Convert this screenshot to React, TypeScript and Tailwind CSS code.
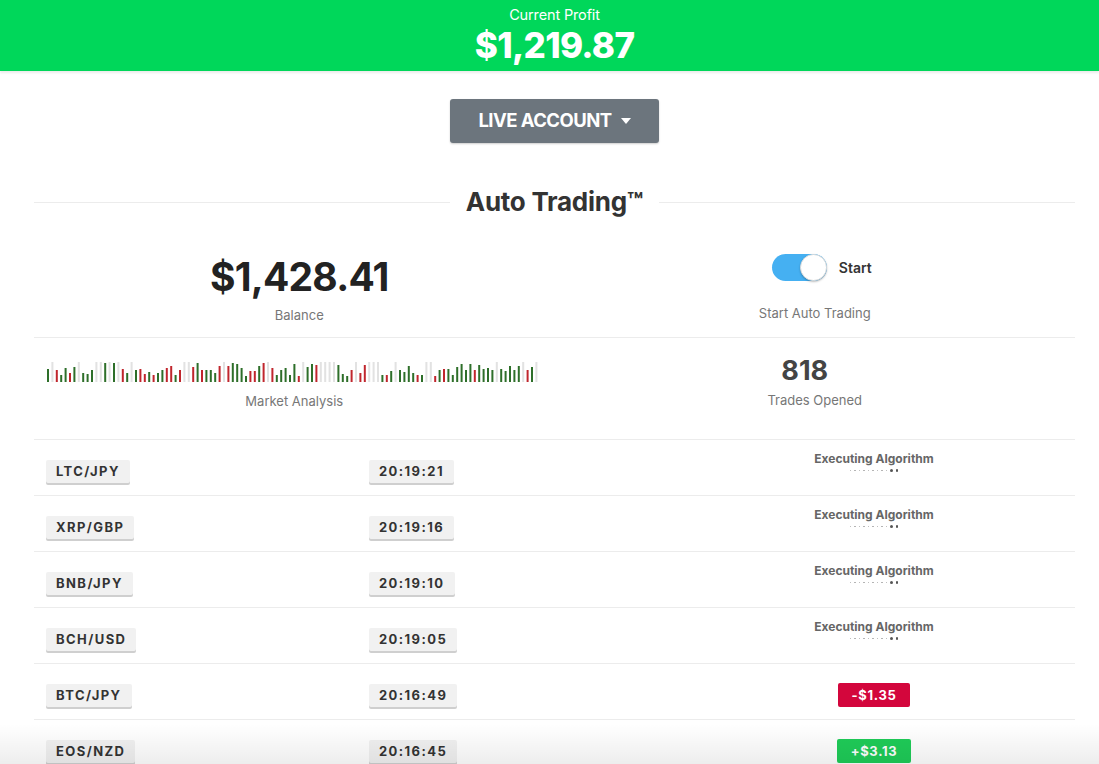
import React from "react";

const rows = [
  { pair: "LTC/JPY", time: "20:19:21", result: null },
  { pair: "XRP/GBP", time: "20:19:16", result: null },
  { pair: "BNB/JPY", time: "20:19:10", result: null },
  { pair: "BCH/USD", time: "20:19:05", result: null },
  { pair: "BTC/JPY", time: "20:16:49", result: "-$1.35" },
  { pair: "EOS/NZD", time: "20:16:45", result: "+$3.13" },
];

function Bars() {
  const bars: { x: number; h: number; c: string }[] = [];
  let seed = 7;
  const rnd = () => {
    seed = (seed * 9301 + 49297) % 233280;
    return seed / 233280;
  };
  const n = 112;
  for (let i = 0; i < n; i++) {
    const r = rnd();
    const c = r < 0.2 ? "#e2e2e2" : r < 0.42 ? "#c0262d" : "#2e6f2a";
    const h = c === "#e2e2e2" ? 20 : 6 + Math.floor(rnd() * 14);
    bars.push({ x: i * 4.4, h, c });
  }
  return (
    <svg width="494" height="22" viewBox="0 0 494 22">
      {bars.map((b, i) => (
        <rect key={i} x={b.x} y={21 - b.h} width="2" height={b.h} fill={b.c} />
      ))}
    </svg>
  );
}

function Tag({ children }: { children: React.ReactNode }) {
  return (
    <span className="inline-block bg-[#f1f1f1] px-[10px] h-[23px] leading-[23px] text-[13px] font-bold tracking-[0.11em] text-[#333] shadow-[0_2px_0_#cfcfcf] rounded-[2px]">
      {children}
    </span>
  );
}

export default function App() {
  return (
    <div
      className="relative w-[1099px] h-[764px] overflow-hidden bg-white"
      style={{ fontFamily: "Inter, 'Liberation Sans', Arial, sans-serif" }}
    >
      <div className="h-[71px] bg-[#00d75a] flex flex-col items-center pl-[10px] text-white shadow-[0_2px_2px_rgba(0,0,0,0.08)]">
        <div className="text-[14.5px] leading-[18px] mt-[6px] tracking-[-0.01em]">Current Profit</div>
        <div className="text-[35px] leading-[42px] font-extrabold tracking-[-0.02em]">$1,219.87</div>
      </div>

      <div className="flex justify-center mt-[28px] pl-[10px]">
        <button className="w-[209px] h-[44px] bg-[#6c757d] rounded-[3px] text-white text-[18.5px] font-bold tracking-[-0.03em] flex items-center justify-center gap-[9px] shadow-[0_1px_2px_rgba(0,0,0,0.2)]">
          LIVE ACCOUNT
          <svg width="10" height="6" viewBox="0 0 10 6">
            <path d="M0 0 L10 0 L5 6 Z" fill="white" />
          </svg>
        </button>
      </div>

      <div className="ml-[34px] w-[1041px]">
        <div className="flex items-center mt-[43px] gap-[16px]">
          <div className="flex-1 h-px bg-[#ececec]" />
          <div className="text-[26px] font-bold text-[#333] tracking-[-0.01em] leading-[32px]">Auto Trading™</div>
          <div className="flex-1 h-px bg-[#ececec]" />
        </div>

        <div className="grid grid-cols-2 h-[109px] border-b border-[#ececec] mt-[11px]">
          <div className="flex flex-col items-center pt-[24px] pl-[10px]">
            <div className="text-[39px] font-bold text-[#222] leading-[48px] tracking-[-0.02em]">$1,428.41</div>
            <div className="text-[13px] text-[#777] mt-[5px]">Balance</div>
          </div>
          <div className="flex flex-col items-center pt-[25px]">
            <div className="flex items-center gap-[12px] ml-[14px]">
              <div className="w-[55px] h-[27px] rounded-full bg-[#45b0f2] relative">
                <div className="absolute right-0 top-0 w-[27px] h-[27px] rounded-full bg-white border border-[#ddd] shadow-[0_1px_2px_rgba(0,0,0,0.25)]" />
              </div>
              <span className="text-[14px] font-semibold text-[#333]">Start</span>
            </div>
            <div className="text-[13px] text-[#777] mt-[23px]">Start Auto Trading</div>
          </div>
        </div>

        <div className="grid grid-cols-2 h-[102px] border-b border-[#ececec]">
          <div className="flex flex-col items-center pt-[23px]">
            <Bars />
            <div className="text-[13px] text-[#777] mt-[9px]">Market Analysis</div>
          </div>
          <div className="flex flex-col items-center pt-[17px]">
            <div className="text-[27px] font-bold text-[#444] leading-[32px] -ml-[20px]">818</div>
            <div className="text-[13px] text-[#777] mt-[4px]">Trades Opened</div>
          </div>
        </div>

        {rows.map((r, i) => (
          <div key={i} className="grid grid-cols-[323px_316px_1fr] h-[56px] border-b border-[#ececec] items-center">
            <div className="pl-[12px] pt-[6px]">
              <Tag>{r.pair}</Tag>
            </div>
            <div className="pl-[12px] pt-[6px]">
              <Tag>{r.time}</Tag>
            </div>
            <div className="flex flex-col items-center">
              {r.result === null ? (
                <div className="flex flex-col items-center -mt-[12px]">
                  <div className="text-[12px] font-bold text-[#666] leading-[16px]">Executing Algorithm</div>
                  <div className="flex items-center gap-[3px] mt-[2px]">
                    {Array.from({ length: 9 }).map((_, k) => (
                      <span key={k} className="w-[1.5px] h-[1.5px] bg-[#aaa] rounded-full" />
                    ))}
                    <span className="w-[2.5px] h-[2.5px] bg-[#555] rounded-full" />
                    <span className="w-[2.5px] h-[2.5px] bg-[#555] rounded-full" />
                  </div>
                </div>
              ) : (
                <span
                  className={
                    r.result.startsWith("-")
                      ? "mt-[6px] inline-block w-[72px] h-[24px] leading-[24px] text-center rounded-[2px] text-white text-[13px] font-bold tracking-[0.05em] bg-[#d3063c]"
                      : "mt-[6px] inline-block w-[74px] h-[24px] leading-[24px] text-center rounded-[2px] text-white text-[13px] font-bold tracking-[0.05em] bg-[#1fcc58]"
                  }
                >
                  {r.result}
                </span>
              )}
            </div>
          </div>
        ))}
      </div>

      <div className="absolute left-0 right-0 bottom-0 h-[40px] bg-gradient-to-b from-transparent to-[rgba(0,0,0,0.07)] pointer-events-none" />
    </div>
  );
}
